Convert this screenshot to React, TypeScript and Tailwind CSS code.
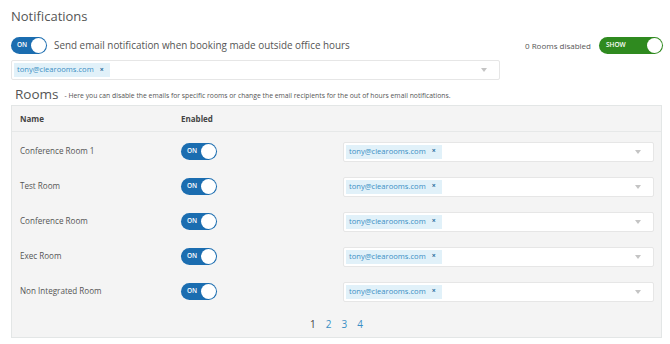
import { useState } from "react";

const rooms = [
  "Conference Room 1",
  "Test Room",
  "Conference Room",
  "Exec Room",
  "Non Integrated Room",
];

const Toggle = ({ on, label, green }: { on: boolean; label: string; green?: boolean }) => (
  <div
    className={
      green
        ? "flex h-[17px] w-[64px] items-center justify-between rounded-full bg-[#2f8a1f] pl-[7px] pr-[1px]"
        : "flex h-[17px] w-[36px] items-center justify-between rounded-full bg-[#1b6db0] pl-[6px] pr-[1px]"
    }
  >
    <span className="text-[6.5px] font-semibold leading-none text-white">{on ? label : ""}</span>
    <span className="h-[15px] w-[15px] rounded-full bg-white" />
  </div>
);

const Chip = ({ email }: { email: string }) => (
  <span className="flex h-[14px] items-center gap-[6px] bg-[#e1f1f9] pl-[3px] pr-[6px] text-[7.6px] text-[#3a8fc4]">
    {email}
    <span className="text-[7px] font-bold text-[#2a6d9c]">×</span>
  </span>
);

const EmailSelect = ({ className }: { className: string }) => (
  <div
    className={
      "flex h-[20px] items-center justify-between rounded-[2px] border border-[#e6e6e6] bg-white pl-[2px] pr-[12px] " +
      className
    }
  >
    <Chip email="tony@clearooms.com" />
    <svg width="6" height="4" viewBox="0 0 6 4">
      <path d="M0 0 L6 0 L3 4 Z" fill="#c4c4c4" />
    </svg>
  </div>
);

export default function App() {
  const [page] = useState(1);

  return (
    <div
      className="h-[344px] w-[670px] bg-white px-[11px] pt-[6px] text-[#444]"
      style={{ fontFamily: '"Open Sans", "Noto Sans", sans-serif' }}
    >
      <h1 className="text-[13px] leading-[20px] text-[#555]">Notifications</h1>

      <div className="mt-[11px] flex items-center justify-between">
        <div className="flex items-center gap-[7px]">
          <Toggle on label="ON" />
          <span className="text-[9.9px] text-[#555]">
            Send email notification when booking made outside office hours
          </span>
        </div>
        <div className="mr-[-4px] flex items-center gap-[8px]">
          <span className="text-[8px] text-[#555]">0 Rooms disabled</span>
          <Toggle on label="SHOW" green />
        </div>
      </div>

      <EmailSelect className="mt-[6px] w-[489px]" />

      <div className="mt-[6px] flex items-end gap-[6px] pl-[4px]">
        <span className="text-[13.5px] leading-[17px] text-[#555]">Rooms</span>
        <span className="pb-[2px] text-[6.8px] text-[#555]">
          - Here you can disable the emails for specific rooms or change the email recipients for the out of hours email notifications.
        </span>
      </div>

      <div className="mt-[2px] h-[233px] w-[651px] border border-[#e3e6e6] bg-[#f4f4f4]">
        <div className="grid h-[26px] grid-cols-[161px_162px_1fr] items-center border-b border-[#e6e8e8] px-[8px] text-[8px] font-bold text-[#444]">
          <span>Name</span>
          <span>Enabled</span>
          <span />
        </div>
        <div className="pt-[2px]">
          {rooms.map((room) => (
            <div
              key={room}
              className="grid h-[35px] grid-cols-[161px_162px_1fr] items-center pl-[8px] pr-[7px] text-[8.1px] text-[#555]"
            >
              <span>{room}</span>
              <Toggle on label="ON" />
              <EmailSelect className="w-full" />
            </div>
          ))}
        </div>
        <div className="mt-[8px] flex justify-center gap-[10px] text-[10px]">
          {[1, 2, 3, 4].map((n) => (
            <span key={n} className={n === page ? "text-[#444]" : "text-[#3a8fc4]"}>
              {n}
            </span>
          ))}
        </div>
      </div>
    </div>
  );
}
